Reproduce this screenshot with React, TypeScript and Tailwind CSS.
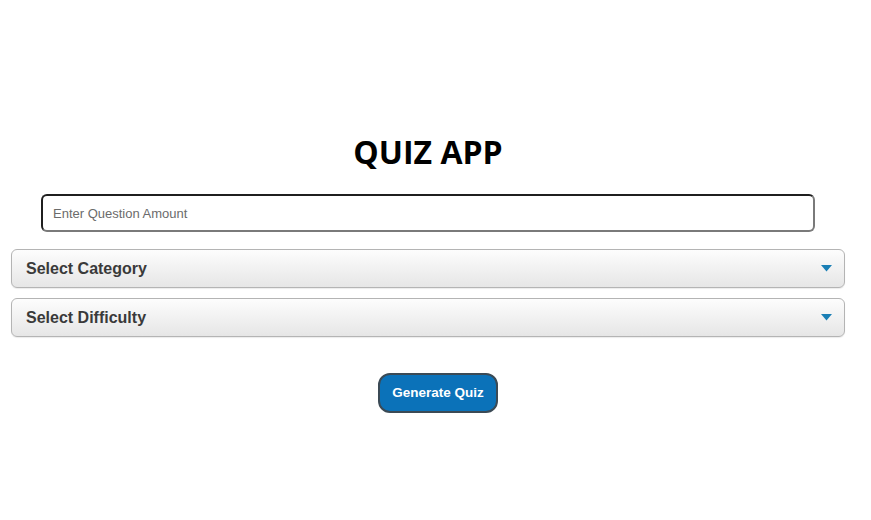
import React from 'react';

const Arrow: React.FC = () => (
  <svg width="11" height="7" viewBox="0 0 11 7" className="shrink-0">
    <path d="M0 0h11L5.5 6.5z" fill="#1a7fb5" />
  </svg>
);

const SelectBox: React.FC<{ label: string }> = ({ label }) => (
  <div className="flex h-[39px] items-center justify-between rounded-[6px] border border-[#b4b4b4] bg-gradient-to-b from-[#fdfdfd] to-[#e6e6e6] pl-[14px] pr-[12px] shadow-[0_1px_1px_rgba(0,0,0,0.08)]">
    <span className="text-[16px] font-bold text-[#3a3a3a]">{label}</span>
    <Arrow />
  </div>
);

const App: React.FC = () => {
  return (
    <div className="min-h-[520px] w-[871px] bg-white font-['Liberation_Sans',Arial,sans-serif]">
      <div className="ml-[11px] flex w-[834px] flex-col pt-[130px]">
        <h1 className="text-center font-['Open_Sans',sans-serif] text-[32px] font-bold leading-[44px] text-black">
          QUIZ APP
        </h1>
        <div className="mx-[30px] mt-[20px]">
          <input
            type="text"
            placeholder="Enter Question Amount"
            className="h-[38px] w-full rounded-[6px] border-2 border-t-[#1f1f1f] border-l-[#1f1f1f] border-r-[#7a7a7a] border-b-[#7a7a7a] bg-white px-[10px] text-[13px] text-[#333] outline-none placeholder:text-[#6b6b6b]"
          />
        </div>
        <div className="mt-[17px] flex flex-col gap-[10px]">
          <SelectBox label="Select Category" />
          <SelectBox label="Select Difficulty" />
        </div>
        <div className="mt-[36px] flex justify-center pl-[20px]">
          <button className="h-[40px] w-[120px] rounded-[12px] border-2 border-[#3b4a55] bg-[#0b72b9] text-[13.5px] font-bold text-white">
            Generate Quiz
          </button>
        </div>
      </div>
    </div>
  );
};

export default App;
